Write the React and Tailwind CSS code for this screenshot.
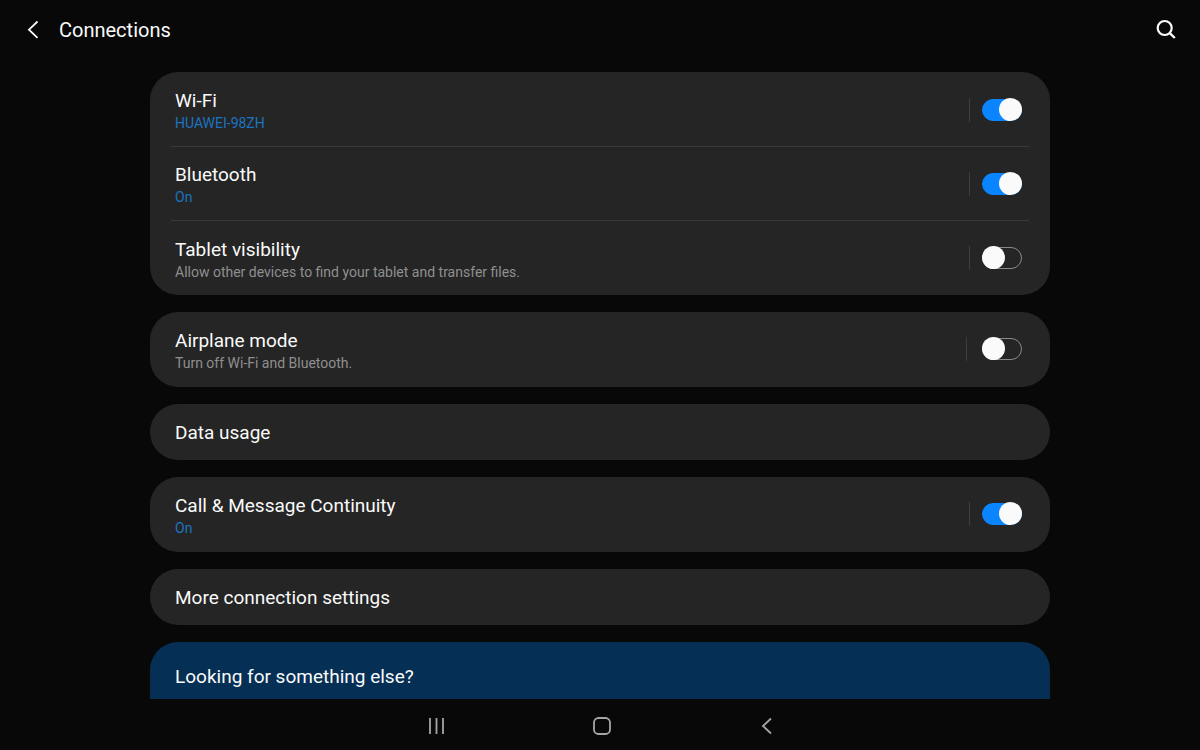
import React, { useState } from "react";

const groups = [
  [
    { id: "wifi", title: "Wi-Fi", status: "HUAWEI-98ZH", toggle: true },
    { id: "bluetooth", title: "Bluetooth", status: "On", toggle: true },
    {
      id: "visibility",
      title: "Tablet visibility",
      description: "Allow other devices to find your tablet and transfer files.",
      toggle: true,
    },
  ],
  [
    {
      id: "airplane",
      title: "Airplane mode",
      description: "Turn off Wi-Fi and Bluetooth.",
      toggle: true,
      wide: true,
    },
  ],
  [{ id: "data", title: "Data usage" }],
  [
    {
      id: "continuity",
      title: "Call & Message Continuity",
      status: "On",
      toggle: true,
    },
  ],
  [{ id: "more", title: "More connection settings" }],
];

const Switch = ({ id, checked, onChange }) => (
  <input
    type="checkbox"
    role="switch"
    id={id}
    checked={checked}
    onChange={onChange}
    className="relative w-10 h-[22px] shrink-0 appearance-none rounded-full border border-[#8a8a8a] cursor-pointer checked:bg-[#0a84ff] checked:border-[#0a84ff] before:absolute before:-top-[2px] before:-left-px before:w-[23px] before:h-[23px] before:rounded-full before:bg-[#fafafa] checked:before:left-4"
  />
);

const SettingRow = ({ item, checked, onToggle }) => {
  if (!item.toggle) {
    return (
      <button
        type="button"
        className="block w-full h-14 px-1 pt-0.5 text-left text-[19px] leading-6"
      >
        {item.title}
      </button>
    );
  }

  return (
    <div className="flex items-center h-[74px] pl-1 pr-[7px]">
      <label htmlFor={item.id} className="flex-1 pt-[3px] cursor-pointer">
        <span className="block text-[19px] leading-6">{item.title}</span>
        <span
          className={`block text-[14px] leading-5 ${
            item.status ? "text-[#1b74c0]" : "text-[#8f8f8f]"
          }`}
        >
          {item.status || item.description}
        </span>
      </label>
      <span
        className={`w-px h-6 bg-[#3d3d3d] ${item.wide ? "mr-[15px]" : "mr-3"}`}
      />
      <Switch id={item.id} checked={checked} onChange={onToggle} />
    </div>
  );
};

const App = () => {
  const [enabled, setEnabled] = useState({
    wifi: true,
    bluetooth: true,
    visibility: false,
    airplane: false,
    continuity: true,
  });

  const toggle = (id) => setEnabled((prev) => ({ ...prev, [id]: !prev[id] }));

  return (
    <div className="flex flex-col h-screen bg-[#080808] text-[#fafafa] font-['Roboto',sans-serif]">
      {/* Header */}
      <header className="flex items-center h-[60px] shrink-0 pl-6 pr-[22px]">
        <button type="button" aria-label="Back">
          <svg viewBox="0 0 20 20" className="w-5 h-5" fill="none">
            <path d="M13.5 1.500 5 9.700l8.500 8.200" stroke="currentColor" strokeWidth="1.8" />
          </svg>
        </button>
        <h1 className="flex-1 ml-[15px] text-[20px] leading-6">Connections</h1>
        <button type="button" aria-label="Search">
          <svg viewBox="0 0 24 24" className="w-6 h-6" fill="none">
            <circle cx="10.700" cy="10" r="7" stroke="currentColor" strokeWidth="2.200" />
            <path d="M15.500 14.800 20.800 20" stroke="currentColor" strokeWidth="2.400" />
          </svg>
        </button>
      </header>

      {/* Settings list */}
      <main className="flex-1 min-h-0 overflow-hidden pt-3">
        <div className="flex flex-col gap-[17px] w-3/4 mx-auto">
          {groups.map((items) => (
            <section
              key={items[0].id}
              className={`shrink-0 px-[21px] rounded-[28px] bg-[#252525] divide-y divide-[#3a3a3a] ${
                items.length > 1 ? "pt-px" : items[0].toggle ? "pb-px" : ""
              }`}
            >
              {items.map((item) => (
                <SettingRow
                  key={item.id}
                  item={item}
                  checked={enabled[item.id]}
                  onToggle={() => toggle(item.id)}
                />
              ))}
            </section>
          ))}
          <section className="shrink-0 h-40 px-[25px] pt-[23px] rounded-[28px] bg-[#052f54]">
            <h2 className="text-[19px] leading-6">Looking for something else?</h2>
          </section>
        </div>
      </main>

      {/* Navigation bar */}
      <nav className="flex justify-center h-[51px] shrink-0 pl-1 pt-[2px] text-[#a6a6a6]">
        <button type="button" aria-label="Recents" className="flex items-center justify-center w-[165px]">
          <svg viewBox="0 0 20 20" className="w-5 h-5" fill="none">
            <path d="M3 2v16M9.500 2v16M16 2v16" stroke="currentColor" strokeWidth="1.800" />
          </svg>
        </button>
        <button type="button" aria-label="Home" className="flex items-center justify-center w-[165px]">
          <svg viewBox="0 0 20 20" className="w-5 h-5" fill="none">
            <rect x="2" y="2" width="16" height="16" rx="4.500" stroke="currentColor" strokeWidth="1.800" />
          </svg>
        </button>
        <button type="button" aria-label="Back" className="flex items-center justify-center w-[165px]">
          <svg viewBox="0 0 20 20" className="w-5 h-5" fill="none">
            <path d="M14 2.500 6 10l8 7.500" stroke="currentColor" strokeWidth="1.800" />
          </svg>
        </button>
      </nav>
    </div>
  );
};

export default App;
